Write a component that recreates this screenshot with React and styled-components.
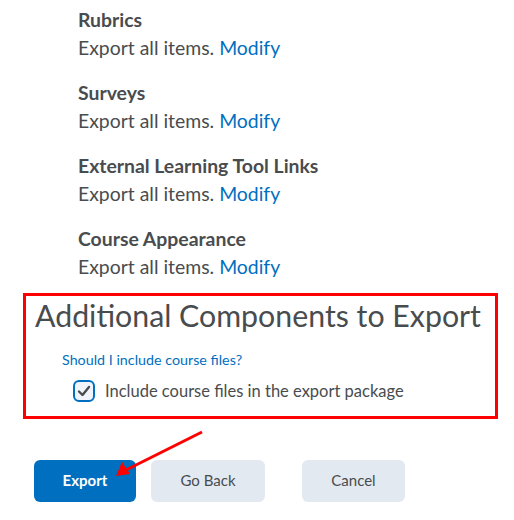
import React from 'react'
import styled, { createGlobalStyle } from 'styled-components'

const GlobalStyle = createGlobalStyle`
  body {
    margin: 0;
    background: #fff;
    font-family: Lato, "Noto Sans", sans-serif;
    color: #494c4e;
  }
`

const Page = styled.div`
  position: relative;
  width: 514px;
  height: 520px;
  padding-top: 6px;
  box-sizing: border-box;
  overflow: hidden;
`

const List = styled.div`
  padding-left: 78px;
  display: flex;
  flex-direction: column;
  gap: 17px;
`

const Item = styled.div`
  display: flex;
  flex-direction: column;
`

const ItemTitle = styled.div`
  font-size: 19.4px;
  font-weight: 700;
  line-height: 28px;
`

const ItemText = styled.div`
  font-size: 19.4px;
  line-height: 28px;
`

const Link = styled.a`
  color: #006fbf;
  text-decoration: none;
`

const Highlight = styled.section`
  margin: 12px 0 0 23px;
  width: 475px;
  height: 126px;
  box-sizing: border-box;
  border: 3px solid #ff0000;
  padding: 1px 0 0 9px;
`

const Heading = styled.h2`
  margin: 0;
  font-size: 30.3px;
  font-weight: 400;
  line-height: 36px;
`

const HelpLine = styled.div`
  margin: 17px 0 0 27px;
  font-size: 14.3px;
  line-height: 20px;
`

const CheckRow = styled.label`
  display: flex;
  align-items: center;
  gap: 10px;
  margin: 10px 0 0 38px;
  font-size: 16.5px;
  line-height: 22px;
`

const Box = styled.span`
  width: 22px;
  height: 22px;
  box-sizing: border-box;
  border: 2px solid #006fbf;
  border-radius: 6px;
  background: #f1f5fb;
  display: flex;
  align-items: center;
  justify-content: center;
`

const Actions = styled.div`
  display: flex;
  margin: 41px 0 0 34px;
`

const Button = styled.button`
  height: 42px;
  width: ${(p) => p.w}px;
  margin-right: ${(p) => p.gap || 0}px;
  padding: 0 0 2px;
  border: none;
  border-radius: 6px;
  font-family: Lato, "Noto Sans", sans-serif;
  font-size: 15px;
  font-weight: ${(p) => (p.primary ? 700 : 400)};
  background: ${(p) => (p.primary ? '#006fbf' : '#e3e9f1')};
  color: ${(p) => (p.primary ? '#fff' : '#494c4e')};
`

const Arrow = styled.svg`
  position: absolute;
  left: 0;
  top: 0;
  pointer-events: none;
`

const items = ['Rubrics', 'Surveys', 'External Learning Tool Links', 'Course Appearance']

export default function App() {
  return (
    <>
      <GlobalStyle />
      <Page>
        <List>
          {items.map((t) => (
            <Item key={t}>
              <ItemTitle>{t}</ItemTitle>
              <ItemText>
                Export all items. <Link href="#">Modify</Link>
              </ItemText>
            </Item>
          ))}
        </List>
        <Highlight>
          <Heading>Additional Components to Export</Heading>
          <HelpLine>
            <Link href="#">Should I include course files?</Link>
          </HelpLine>
          <CheckRow>
            <Box>
              <svg width="14" height="12" viewBox="0 0 14 12">
                <path d="M2 6.5 L5.5 10 L12 2" fill="none" stroke="#494c4e" strokeWidth="2.4" strokeLinecap="round" strokeLinejoin="round" />
              </svg>
            </Box>
            Include course files in the export package
          </CheckRow>
        </Highlight>
        <Actions>
          <Button primary w={102} gap={15}>Export</Button>
          <Button w={114} gap={37}>Go Back</Button>
          <Button w={103}>Cancel</Button>
        </Actions>
        <Arrow width="514" height="520">
          <line x1="202" y1="432" x2="126" y2="470" stroke="#ff0000" strokeWidth="3" />
          <polygon points="116,476 122,462 130,474" fill="#ff0000" />
        </Arrow>
      </Page>
    </>
  )
}
